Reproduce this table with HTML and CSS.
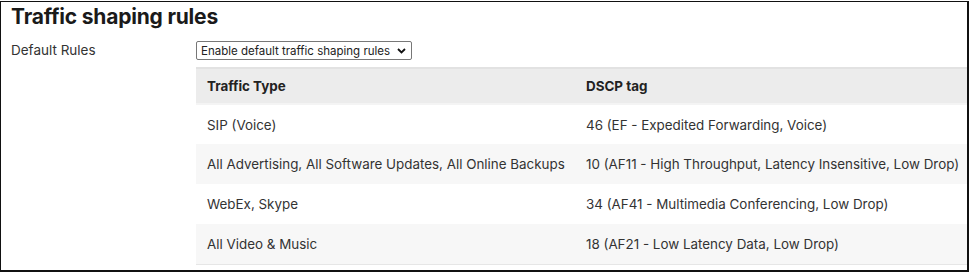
FILE: index.html
```html
<!DOCTYPE html>
<html lang="en">
<head>
  <meta charset="UTF-8">
  <title>Traffic shaping rules</title>
  <link rel="stylesheet" href="styles.css">
</head>
<body>
  <div class="frame">
    <h1>Traffic shaping rules</h1>

    <div class="field">
      <label class="label">Default Rules</label>
      <div class="value">
        <div class="select">
          <span>Enable default traffic shaping rules</span>
          <svg width="9" height="6" viewBox="0 0 9 6"><path d="M1 1l3.5 3.5L8 1" fill="none" stroke="#111" stroke-width="1.8"/></svg>
        </div>

        <table class="rules">
          <thead>
            <tr>
              <th class="col-type">Traffic Type</th>
              <th>DSCP tag</th>
            </tr>
          </thead>
          <tbody>
            <tr>
              <td>SIP (Voice)</td>
              <td>46 (EF - Expedited Forwarding, Voice)</td>
            </tr>
            <tr>
              <td>All Advertising, All Software Updates, All Online Backups</td>
              <td>10 (AF11 - High Throughput, Latency Insensitive, Low Drop)</td>
            </tr>
            <tr>
              <td>WebEx, Skype</td>
              <td>34 (AF41 - Multimedia Conferencing, Low Drop)</td>
            </tr>
            <tr>
              <td>All Video &amp; Music</td>
              <td>18 (AF21 - Low Latency Data, Low Drop)</td>
            </tr>
          </tbody>
        </table>
      </div>
    </div>
  </div>
</body>
</html>
```

FILE: styles.css
```css
* {
  margin: 0;
  padding: 0;
  box-sizing: border-box;
  font-family: 'Inter', 'Liberation Sans', sans-serif;
}

body {
  background: #fff;
  color: #333;
}

.frame {
  margin-top: 1px;
  width: 969px;
  height: 271px;
  border: 1px solid #111;
  border-right-width: 2px;
  border-bottom-width: 2px;
  padding: 2px 0 0 10px;
  overflow: hidden;
}

h1 {
  font-size: 21px;
  font-weight: 700;
  color: #1a1a1a;
  line-height: 26px;
  letter-spacing: -0.2px;
}

.field {
  display: flex;
  margin-top: 11px;
}

.label {
  flex-shrink: 0;
  width: 185px;
  font-size: 13.5px;
  line-height: 18px;
  color: #333;
}

.value {
  display: flex;
  flex-direction: column;
  align-items: flex-start;
}

.select {
  width: 216px;
  height: 19px;
  border: 1px solid #777;
  border-radius: 2px;
  display: flex;
  align-items: center;
  justify-content: space-between;
  padding: 0 5px 0 4px;
  font-size: 11.5px;
  color: #222;
}

.rules {
  margin-top: 7px;
  width: 800px;
  table-layout: fixed;
  border-collapse: collapse;
  font-size: 13.4px;
  color: #333;
}

.rules th,
.rules td {
  white-space: nowrap;
  padding: 0 11px;
}

.rules th {
  text-align: left;
  font-weight: 700;
  color: #222;
  background: #ececec;
  height: 36px;
  border-top: 2px solid #e2e2e2;
  border-bottom: 2px solid #f4f4f4;
}

.rules .col-type {
  width: 379px;
}

.rules td {
  height: 40px;
}

.rules tbody tr:nth-child(even) td {
  background: #f7f7f7;
}

.rules tbody tr:last-child td {
  border-bottom: 1px solid #e6e6e6;
}
```
